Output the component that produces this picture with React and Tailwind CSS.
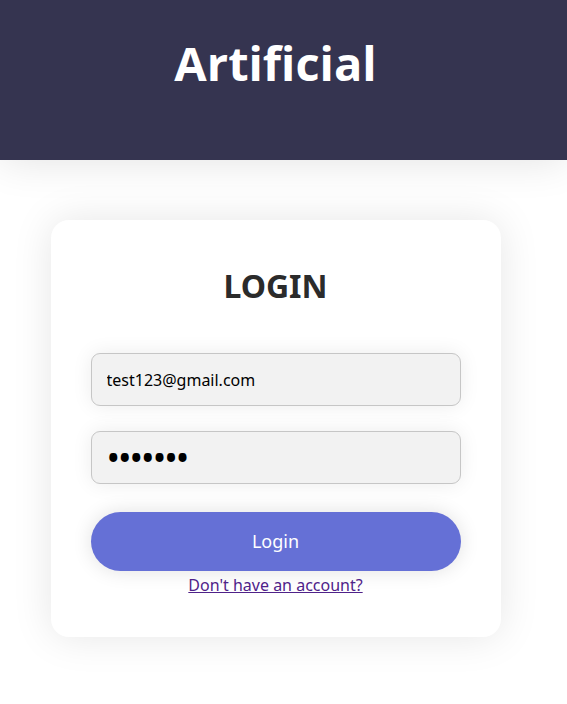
import { useState } from 'react';

export default function App() {
  const [email, setEmail] = useState('test123@gmail.com');
  const [password, setPassword] = useState('1234567');

  return (
    <div className="min-h-[704px] bg-white font-['Noto_Sans',sans-serif]">
      <header className="h-[160px] bg-[#353450] shadow-[0_0_40px_rgba(0,0,0,0.12)] pt-[28px]">
        <h1 className="w-[551px] text-center font-['Open_Sans',sans-serif] text-[47px] font-bold text-white leading-normal">
          Artificial
        </h1>
      </header>

      <div className="flex w-[551px] justify-center pt-[60px]">
        <form
          onSubmit={(e) => e.preventDefault()}
          className="w-[450px] rounded-[18px] bg-white px-[40px] pt-[42px] pb-[40px] shadow-[0_0_40px_rgba(0,0,0,0.1)]"
        >
          <h2 className="text-center text-[32px] font-bold leading-normal text-[#2b2b2b]">LOGIN</h2>

          <div className="mt-[43px] flex flex-col gap-[25px]">
            <input
              value={email}
              onChange={(e) => setEmail(e.target.value)}
              className="h-[53px] w-full rounded-[9px] border border-[#c6c6c6] bg-[#f2f2f2] px-[15px] text-[16px] text-black shadow-[0_0_20px_rgba(0,0,0,0.08)] outline-none"
            />
            <input
              type="password"
              value={password}
              onChange={(e) => setPassword(e.target.value)}
              className="h-[53px] w-full rounded-[9px] border border-[#c6c6c6] bg-[#f2f2f2] px-[15px] text-[36px] tracking-[-2px] text-black shadow-[0_0_20px_rgba(0,0,0,0.08)] outline-none"
            />
          </div>

          <button
            type="submit"
            className="mt-[28px] h-[59px] w-full rounded-full bg-[#6570d6] text-[18px] text-white shadow-[0_0_20px_rgba(0,0,0,0.12)]"
          >
            Login
          </button>

          <div className="mt-[2px] text-center">
            <a href="#" className="text-[16px] text-[#4f2289] underline">
              Don't have an account?
            </a>
          </div>
        </form>
      </div>
    </div>
  );
}
